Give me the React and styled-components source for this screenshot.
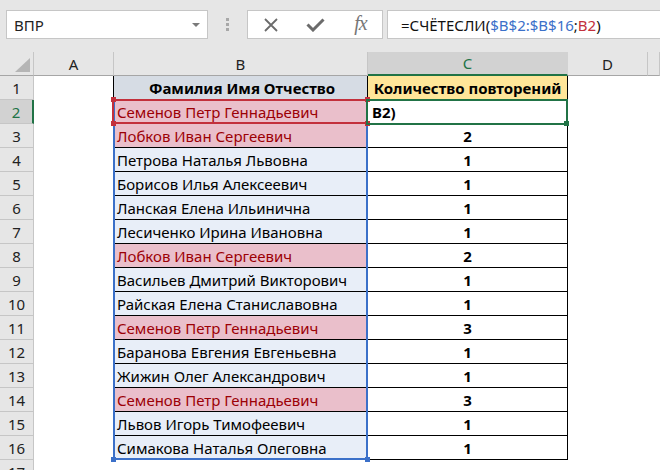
import React from 'react';
import styled, { createGlobalStyle } from 'styled-components';

const GlobalStyle = createGlobalStyle`
  html, body { margin: 0; padding: 0; background: #fff; }
  body { font-family: "Noto Sans", "Liberation Sans", sans-serif; overflow: hidden; }
  * { box-sizing: border-box; }
`;

const Page = styled.div`
  width: 660px;
  height: 470px;
  overflow: hidden;
  background: #fff;
`;

const Toolbar = styled.div`
  height: 52px;
  background: #e6e6e6;
  display: flex;
  align-items: flex-start;
  padding: 10px 0 0 6px;
`;

const NameBox = styled.div`
  width: 202px;
  height: 29px;
  background: #fff;
  border: 1px solid #c6c6c6;
  display: flex;
  align-items: center;
  justify-content: space-between;
  padding: 0 7px 0 7px;
  font-size: 15px;
  color: #222;
`;

const Caret = styled.span`
  width: 0;
  height: 0;
  border-left: 4px solid transparent;
  border-right: 4px solid transparent;
  border-top: 4px solid #7a7a7a;
`;

const Grip = styled.div`
  display: flex;
  flex-direction: column;
  gap: 2px;
  margin: 8px 18px 0 18px;
`;

const GripDot = styled.span`
  width: 3px;
  height: 3px;
  background: #a8a8a8;
`;

const FxBox = styled.div`
  width: 136px;
  height: 29px;
  background: #fff;
  border: 1px solid #c6c6c6;
  display: grid;
  grid-template-columns: 45px 45px 45px;
  align-items: center;
  justify-items: center;
`;

const FxText = styled.span`
  font-family: "Liberation Serif", "DejaVu Serif", serif;
  font-style: italic;
  font-size: 20px;
  color: #777;
  line-height: 1;
  margin-top: -3px;
  letter-spacing: -1px;
`;

const FormulaBox = styled.div`
  flex: 1;
  margin-left: 4px;
  height: 29px;
  background: #fff;
  border: 1px solid #c6c6c6;
  border-right: none;
  display: flex;
  align-items: center;
  padding-left: 13px;
  font-size: 15px;
  color: #111;
  white-space: nowrap;
`;

const Ref = styled.span`
  color: ${(p) => p.$c};
`;

const Sheet = styled.div`
  position: relative;
`;

const cols = '34px 80px 254px 200px 80px 1fr';

const Row = styled.div`
  display: grid;
  grid-template-columns: ${cols};
  height: 24px;
`;

const Corner = styled.div`
  position: relative;
  background: #e6e6e6;
  border-right: 1px solid #c6c6c6;
  border-bottom: 1px solid #a6a6a6;
  &::after {
    content: '';
    position: absolute;
    right: 3px;
    bottom: 3px;
    width: 0;
    height: 0;
    border-left: 15px solid transparent;
    border-bottom: 14px solid #b5b5b5;
  }
`;

const ColHead = styled.div`
  background: ${(p) => (p.$active ? '#d2d2d2' : '#e6e6e6')};
  color: ${(p) => (p.$active ? '#217346' : '#222')};
  border-right: 1px solid ${(p) => (p.$active ? '#d2d2d2' : '#c6c6c6')};
  border-bottom: ${(p) => (p.$active ? '2px solid #217346' : '1px solid #a6a6a6')};
  display: flex;
  align-items: center;
  justify-content: center;
  font-size: 15px;
`;

const RowHead = styled.div`
  background: ${(p) => (p.$active ? '#d2d2d2' : '#e6e6e6')};
  color: ${(p) => (p.$active ? '#217346' : '#222')};
  border-right: ${(p) => (p.$active ? '2px solid #217346' : '1px solid #c6c6c6')};
  border-bottom: 1px solid #c6c6c6;
  display: flex;
  align-items: center;
  justify-content: center;
  font-size: 15px;
`;

const Blank = styled.div`
  background: #fff;
  border-right: ${(p) => (p.$edge ? '1px solid #000' : 'none')};
`;

const NameCell = styled.div`
  background: ${(p) => (p.$head ? '#d6dce4' : p.$dup ? '#eabfcb' : '#e8eef8')};
  color: ${(p) => (p.$dup ? '#9c0006' : '#000')};
  font-weight: ${(p) => (p.$head ? 700 : 400)};
  justify-content: ${(p) => (p.$head ? 'center' : 'flex-start')};
  border-right: 1px solid #000;
  border-bottom: 1px solid #000;
  display: flex;
  align-items: center;
  padding-left: 3px;
  font-size: 15px;
  white-space: nowrap;
  overflow: hidden;
`;

const CountCell = styled.div`
  background: ${(p) => (p.$head ? '#ffe699' : '#fff')};
  border-right: 1px solid #000;
  border-bottom: 1px solid #000;
  display: flex;
  align-items: center;
  justify-content: ${(p) => (p.$edit ? 'flex-start' : 'center')};
  padding-left: ${(p) => (p.$edit ? '4px' : '0')};
  font-weight: 700;
  font-size: 15px;
  color: #000;
  white-space: nowrap;
  overflow: hidden;
`;

const Frame = styled.div`
  position: absolute;
  left: ${(p) => p.$x}px;
  top: ${(p) => p.$y}px;
  width: ${(p) => p.$w}px;
  height: ${(p) => p.$h}px;
  border: 2px solid ${(p) => p.$c};
  pointer-events: none;
`;

const Handle = styled.div`
  position: absolute;
  left: ${(p) => p.$x}px;
  top: ${(p) => p.$y}px;
  width: 5px;
  height: 5px;
  background: ${(p) => p.$c};
`;

const data = [
  ['Семенов Петр Геннадьевич', true, 'B2)'],
  ['Лобков Иван Сергеевич', true, '2'],
  ['Петрова Наталья Львовна', false, '1'],
  ['Борисов Илья Алексеевич', false, '1'],
  ['Ланская Елена Ильинична', false, '1'],
  ['Лесиченко Ирина Ивановна', false, '1'],
  ['Лобков Иван Сергеевич', true, '2'],
  ['Васильев Дмитрий Викторович', false, '1'],
  ['Райская Елена Станиславовна', false, '1'],
  ['Семенов Петр Геннадьевич', true, '3'],
  ['Баранова Евгения Евгеньевна', false, '1'],
  ['Жижин Олег Александрович', false, '1'],
  ['Семенов Петр Геннадьевич', true, '3'],
  ['Львов Игорь Тимофеевич', false, '1'],
  ['Симакова Наталья Олеговна', false, '1'],
];

const BLUE = '#3b70c9';
const RED = '#c3303c';
const GREEN = '#217346';

function XIcon() {
  return (
    <svg width="16" height="16" viewBox="0 0 16 16">
      <path d="M2 2 L14 14 M14 2 L2 14" stroke="#6b6b6b" strokeWidth="1.8" fill="none" />
    </svg>
  );
}

function CheckIcon() {
  return (
    <svg width="19" height="14" viewBox="0 0 19 14">
      <path d="M1.5 6.5 L7 12 L17.5 1.5" stroke="#6b6b6b" strokeWidth="3" fill="none" />
    </svg>
  );
}

export default function App() {
  return (
    <Page>
      <GlobalStyle />
      <Toolbar>
        <NameBox>
          <span>ВПР</span>
          <Caret />
        </NameBox>
        <Grip>
          <GripDot />
          <GripDot />
          <GripDot />
        </Grip>
        <FxBox>
          <XIcon />
          <CheckIcon />
          <FxText>fx</FxText>
        </FxBox>
        <FormulaBox>
          =СЧЁТЕСЛИ(<Ref $c={BLUE}>$B$2:$B$16</Ref>;<Ref $c={RED}>B2</Ref>)
        </FormulaBox>
      </Toolbar>
      <Sheet>
        <Row>
          <Corner />
          <ColHead>A</ColHead>
          <ColHead>B</ColHead>
          <ColHead $active>C</ColHead>
          <ColHead>D</ColHead>
          <ColHead />
        </Row>
        <Row>
          <RowHead>1</RowHead>
          <Blank $edge />
          <NameCell $head>Фамилия Имя Отчество</NameCell>
          <CountCell $head>Количество повторений</CountCell>
          <Blank />
          <Blank />
        </Row>
        {data.map(([name, dup, count], i) => (
          <Row key={i}>
            <RowHead $active={i === 0}>{i + 2}</RowHead>
            <Blank $edge />
            <NameCell $dup={dup}>{name}</NameCell>
            <CountCell $edit={i === 0}>{count}</CountCell>
            <Blank />
            <Blank />
          </Row>
        ))}
        <Row>
          <RowHead>17</RowHead>
          <Blank />
          <Blank />
          <Blank />
          <Blank />
          <Blank />
        </Row>
        <Frame $x={113} $y={47} $w={255} $h={361} $c={BLUE} />
        <Handle $x={111} $y={405} $c={BLUE} />
        <Handle $x={365} $y={405} $c={BLUE} />
        <Frame $x={112} $y={47} $w={256} $h={25} $c={RED} />
        <Handle $x={111} $y={45} $c={RED} />
        <Handle $x={365} $y={45} $c={RED} />
        <Handle $x={111} $y={69} $c={RED} />
        <Handle $x={365} $y={69} $c={RED} />
        <Frame $x={366} $y={47} $w={202} $h={26} $c={GREEN} />
        <Handle $x={564} $y={69} $c={GREEN} />
      </Sheet>
    </Page>
  );
}
